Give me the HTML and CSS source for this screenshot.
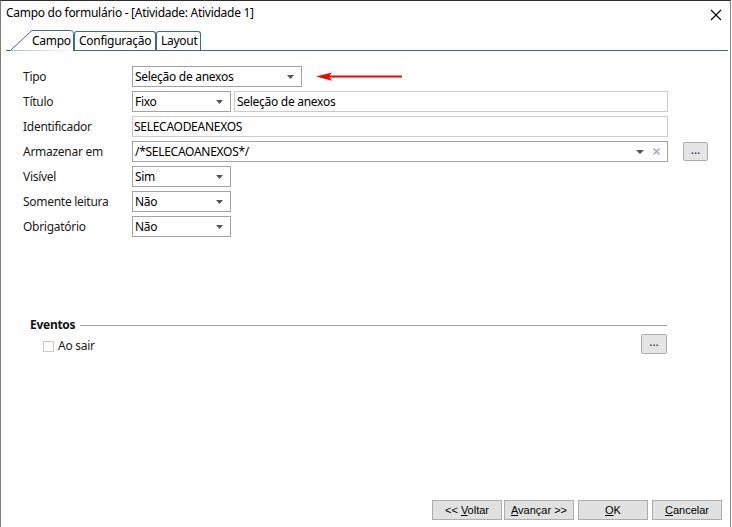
FILE: index.html
```html
<!DOCTYPE html>
<html lang="pt">
<head>
<meta charset="utf-8">
<title>Campo do formulário</title>
<link rel="stylesheet" href="styles.css">
</head>
<body>
<div class="window">
  <header class="titlebar">
    <span class="title">Campo do formulário - [Atividade: Atividade 1]</span>
    <svg class="close" width="12" height="12" viewBox="0 0 12 12"><path d="M1 1L11 11M11 1L1 11" stroke="#000" stroke-width="1.1" fill="none"/></svg>
  </header>
  <nav class="tabs">
    <div class="tab tab-active">
      <svg class="tab-shape" width="68" height="21" viewBox="0 0 68 21"><path d="M0 20.5H4.5L25 1.2Q25.8 0.5 27 0.5H64.5Q67.5 0.5 67.5 3.5V21" stroke="#3f67a8" fill="#fff" stroke-width="1"/></svg>
      <span class="tab-label">Campo</span>
    </div>
    <div class="tab tab-config">Configuração</div>
    <div class="tab tab-layout">Layout</div>
  </nav>
  <main class="content">
    <div class="form">
      <label class="lbl">Tipo</label>
      <div class="field">
        <div class="select sel-wide"><span>Seleção de anexos</span><svg class="caret" width="7" height="4" viewBox="0 0 7 4"><path d="M0 0H7L3.5 4Z"/></svg></div>
        <svg class="annot" width="86" height="10" viewBox="0 0 86 10"><path d="M0 4.5L16 0.5L13.5 3.6H86V5.6H13.5L16 8.8Z" fill="#f00"/></svg>
      </div>

      <label class="lbl">Título</label>
      <div class="field">
        <div class="select sel-narrow"><span>Fixo</span><svg class="caret" width="7" height="4" viewBox="0 0 7 4"><path d="M0 0H7L3.5 4Z"/></svg></div>
        <div class="input input-title">Seleção de anexos</div>
      </div>

      <label class="lbl">Identificador</label>
      <div class="field">
        <div class="input input-full ident">SELECAODEANEXOS</div>
      </div>

      <label class="lbl">Armazenar em</label>
      <div class="field field-store">
        <div class="select input-full"><span>/*SELECAOANEXOS*/</span>
          <svg class="caret caret-store" width="8" height="4" viewBox="0 0 8 4"><path d="M0 0H8L4 4Z"/></svg>
          <svg class="clear" width="7" height="7" viewBox="0 0 7 7"><path d="M0.5 0.5L6.5 6.5M6.5 0.5L0.5 6.5" stroke="#8ea2bb" stroke-width="1.2"/></svg>
        </div>
        <button class="dots dots-store">...</button>
      </div>

      <label class="lbl">Visível</label>
      <div class="field">
        <div class="select sel-narrow"><span>Sim</span><svg class="caret" width="7" height="4" viewBox="0 0 7 4"><path d="M0 0H7L3.5 4Z"/></svg></div>
      </div>

      <label class="lbl">Somente leitura</label>
      <div class="field">
        <div class="select sel-narrow"><span>Não</span><svg class="caret" width="7" height="4" viewBox="0 0 7 4"><path d="M0 0H7L3.5 4Z"/></svg></div>
      </div>

      <label class="lbl">Obrigatório</label>
      <div class="field">
        <div class="select sel-narrow"><span>Não</span><svg class="caret" width="7" height="4" viewBox="0 0 7 4"><path d="M0 0H7L3.5 4Z"/></svg></div>
      </div>
    </div>

    <section class="events">
      <div class="events-head"><span class="events-title">Eventos</span><span class="events-line"></span></div>
      <div class="events-row">
        <span class="check"></span>
        <span class="check-label">Ao sair</span>
        <button class="dots dots-event">...</button>
      </div>
    </section>
  </main>
  <footer class="buttons">
    <button class="btn">&lt;&lt; <u>V</u>oltar</button>
    <button class="btn btn-next"><u>A</u>vançar &gt;&gt;</button>
    <button class="btn"><u>O</u>K</button>
    <button class="btn"><u>C</u>ancelar</button>
  </footer>
</div>
</body>
</html>
```
FILE: styles.css
```css
* { box-sizing: border-box; }
html, body { margin: 0; padding: 0; background: #fff; }
body {
  font-family: "Noto Sans", "Open Sans", sans-serif;
  font-size: 12px;
  letter-spacing: -0.28px;
  color: #1a1a1a;
}
.window {
  width: 731px;
  height: 527px;
  border-top: 1px solid #2e2e2e;
  border-left: 1px solid #7c7c7c;
  border-right: 1px solid #8a8a8a;
  display: flex;
  flex-direction: column;
  background: #fff;
}
.titlebar {
  height: 29px;
  display: flex;
  align-items: flex-start;
  justify-content: space-between;
  padding: 4px 8px 0 5px;
}
.title { line-height: 16px; color: #000; }
.close { margin-top: 4px; }

.tabs {
  display: flex;
  align-items: flex-end;
  height: 21px;
  margin: 0 2px 0 5px;
  border-bottom: 1px solid #3f67a8;
  line-height: 16px;
}
.tab {
  height: 19px;
  border: 1px solid #3f67a8;
  border-bottom: none;
  border-radius: 3px 3px 0 0;
  padding: 1px 0 0 4px;
  color: #000;
  background: #fff;
  white-space: nowrap;
}
.tab-active {
  position: relative;
  width: 68px;
  height: 21px;
  margin-bottom: -1px;
  border: none;
  padding: 3px 0 0 26px;
  background: transparent;
}
.tab-shape { position: absolute; left: 0; top: 0; }
.tab-label { position: relative; }
.tab-config { width: 82px; }
.tab-layout { width: 45px; }

.content { flex: 1; }
.form {
  display: grid;
  grid-template-columns: 109px auto;
  row-gap: 4px;
  align-items: center;
  margin: 15px 0 0 22px;
}
.lbl { line-height: 16px; color: #1a1a1a; }
.field { display: flex; align-items: center; height: 21px; }
.field-store { align-items: flex-start; gap: 15px; }

.select, .input {
  height: 21px;
  border: 1px solid #a3a3a3;
  display: flex;
  align-items: center;
  padding: 0 0 0 2px;
  line-height: 16px;
  color: #000;
  background: #fff;
}
.select span { flex: 1; white-space: nowrap; }
.input { border-color: #cbcbcb; }
.ident { padding-left: 1px; }
.sel-wide { width: 170px; }
.sel-narrow { width: 99px; }
.input-title { width: 434px; margin-left: 3px; }
.input-full { width: 536px; }
.caret { fill: #555; margin-right: 7px; flex: none; }
.caret-store { margin-right: 9px; }
.clear { margin-right: 7px; flex: none; }
.annot { margin-left: 14px; }

.dots {
  font-family: "Noto Sans", sans-serif;
  font-size: 12px;
  line-height: 12px;
  letter-spacing: 0;
  background: #e5e5e5;
  border: 1px solid #adadad;
  border-radius: 2px;
  padding: 0 0 4px;
  color: #3a2a5a;
}
.dots-store { width: 25px; height: 19px; margin-top: 1px; }
.dots-event { width: 26px; height: 20px; margin-left: auto; }

.events { margin: 80px 0 0 29px; width: 637px; }
.events-head { display: flex; align-items: center; height: 16px; }
.events-title { font-weight: bold; line-height: 16px; color: #111; }
.events-line { flex: 1; border-top: 1px solid #a0a0a0; margin-left: 5px; }
.events-row { display: flex; align-items: center; height: 20px; margin-top: 1px; }
.check {
  width: 11px; height: 11px;
  border: 1px solid #c9c9c9;
  margin-left: 13px;
  margin-top: 4px;
  background: #fff;
}
.check-label { margin-left: 4px; line-height: 16px; margin-top: 4px; }

.buttons {
  display: flex;
  justify-content: flex-end;
  padding: 0 8px 7px 0;
  gap: 4px;
}
.btn {
  width: 70px;
  height: 20px;
  padding: 0;
  font-family: "Liberation Sans", Arial, sans-serif;
  font-size: 11px;
  letter-spacing: 0;
  color: #000;
  background: #e1e1e1;
  border: 1px solid #adadad;
}
.btn-next { margin-left: -2px; }
```
